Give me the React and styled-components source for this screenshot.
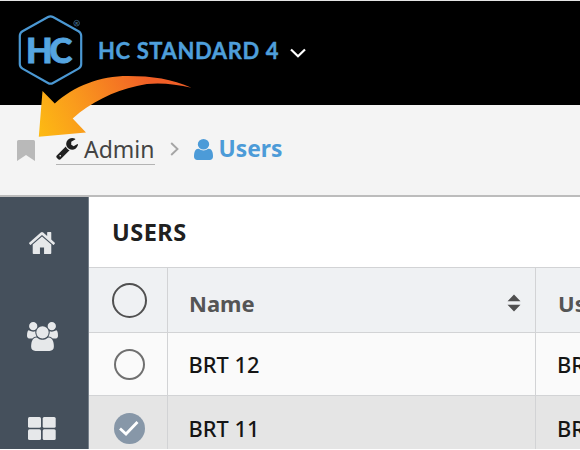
import React from "react";
import styled, { createGlobalStyle, css } from "styled-components";

const GlobalStyle = createGlobalStyle`
  * { box-sizing: border-box; }
  body { margin: 0; background: #fff; }
`;

const Screen = styled.div`
  position: relative;
  width: 580px;
  height: 449px;
  overflow: hidden;
  display: flex;
  flex-direction: column;
  border-top: 1px solid #e4e4e4;
  background: #f4f4f4;
  font-family: "Noto Sans", "Open Sans", sans-serif;
  white-space: nowrap;
`;

const TopBar = styled.header`
  flex: none;
  height: 104px;
  padding-left: 16px;
  display: flex;
  align-items: flex-start;
  background: #000;
`;

const Logo = styled.svg`
  flex: none;
  width: 70px;
  height: 90px;
  font-family: Lato, sans-serif;
`;

const ProductMenu = styled.div`
  display: flex;
  align-items: center;
  gap: 10px;
  height: 30px;
  margin: 35px 0 0 12px;
`;

const ProductName = styled.span`
  width: 182px;
  font: 700 22px/30px Lato, sans-serif;
  letter-spacing: 0.6px;
  -webkit-text-stroke: 0.4px #4e9fdb;
  color: #4e9fdb;
`;

const Breadcrumb = styled.nav`
  flex: none;
  height: 92px;
  padding: 28px 0 0 17px;
  display: flex;
  align-items: flex-start;
  border-bottom: 2px solid #bcbcbc;
`;

const Crumb = styled.span`
  display: flex;
  align-items: center;
  height: 32px;
  gap: 6px;
  font-size: 23px;
  line-height: 32px;
  color: #444;
  ${(p) => p.$link && css`
    margin-left: 21px;
    border-bottom: 1px solid #b4b4b4;
  `}
  ${(p) => p.$current && css`
    margin-left: 15px;
    color: #4c9bd8;
    font-size: 22.8px;
    font-weight: 700;
  `}
`;

const Glyph = styled.svg`
  flex: none;
  display: block;
  width: ${(p) => p.$w}px;
  height: ${(p) => p.$h}px;
  margin-top: ${(p) => p.$top || 0}px;
  margin-left: ${(p) => p.$left || 0}px;
`;

const Body = styled.div`
  flex: 1;
  min-height: 0;
  display: flex;
`;

const Sidebar = styled.aside`
  flex: none;
  width: 89px;
  padding: 35px 4px 0 0;
  display: flex;
  flex-direction: column;
  align-items: center;
  background: #45505c;
  border-right: 1px solid #76808a;
`;

const Content = styled.main`
  flex: 1;
  min-width: 0;
  overflow: hidden;
  background: #fff;
`;

const Title = styled.h1`
  margin: 0;
  height: 70px;
  padding-left: 23px;
  font-size: 23.5px;
  line-height: 70px;
  font-weight: 700;
  letter-spacing: 0.5px;
  color: #202020;
`;

const rowTones = {
  head: ["#eff1f3", "#555", 22, 700],
  plain: ["#fafafa", "#151515", 21.8, 500],
  selected: ["#e5e5e5", "#151515", 21.8, 500],
};

const Row = styled.div`
  display: grid;
  grid-template-columns: 79px 368px 200px;
  height: ${(p) => p.$height}px;
  border-top: 1px solid #d2d3d5;
  background: ${(p) => rowTones[p.$tone][0]};
  color: ${(p) => rowTones[p.$tone][1]};
  font-size: ${(p) => rowTones[p.$tone][2]}px;
  font-weight: ${(p) => rowTones[p.$tone][3]};
`;

const Cell = styled.div`
  display: flex;
  align-items: center;
  justify-content: ${(p) => (p.$center ? "center" : "space-between")};
  padding: ${(p) => p.$pad || "0 14px 0 20.500px"};
  border-right: 1px solid #d2d3d5;
`;

const Radio = styled.span`
  width: ${(p) => p.$size}px;
  height: ${(p) => p.$size}px;
  display: flex;
  align-items: center;
  justify-content: center;
  border-radius: 50%;
  border: ${(p) => (p.$checked ? "0" : `2px solid ${p.$tone}`)};
  background: ${(p) => (p.$checked ? "#8797a8" : "transparent")};
`;

const Callout = styled.svg`
  position: absolute;
  left: 0;
  top: -1px;
  width: 200px;
  height: 145px;
  pointer-events: none;
`;

const HOME =
  "M1472 992v480q0 26-19 45t-45 19h-384v-384h-256v384h-384q-26 0-45-19t-19-45v-480q0-1 .5-3t.5-3l575-474 575 474q1 2 1 6zm223-69l-62 74q-8 9-21 11h-3q-13 0-21-7l-692-577-692 577q-12 8-24 7-13-2-21-11l-62-74q-8-10-7-23.5t11-21.5l719-599q32-26 76-26t76 26l244 204v-195q0-14 9-23t23-9h192q14 0 23 9t9 23v408l219 182q10 8 11 21.5t-7 23.5z";
const USER =
  "M1536 1399q0 109-62.5 187t-150.5 78h-854q-88 0-150.5-78t-62.5-187q0-85 8.5-160.5t31.5-152 58.5-131 94-89 134.5-34.5q131 128 313 128t313-128q76 0 134.5 34.5t94 89 58.5 131 31.5 152 8.5 160.5zm-256-887q0 159-112.5 271.5t-271.5 112.5-271.5-112.5-112.5-271.5 112.5-271.5 271.5-112.5 271.5 112.5 112.5 271.5z";
const GROUP =
  "M529 896q-162 5-265 128h-134q-82 0-138-40.5t-56-118.5q0-353 124-353 6 0 43.5 21t97.5 42.5 119 21.5q67 0 133-23-5 37-5 66 0 139 81 256zm1071 637q0 120-73 189.5t-194 69.5h-874q-121 0-194-69.5t-73-189.5q0-53 3.5-103.5t14-109 26.5-108.5 43-97.5 62-81 85.5-53.5 111.5-20q10 0 43 21.5t73 48 107 48 135 21.5 135-21.5 107-48 73-48 43-21.5q61 0 111.5 20t85.5 53.5 62 81 43 97.5 26.5 108.5 14 109 3.5 103.5zm-1024-1277q0 106-75 181t-181 75-181-75-75-181 75-181 181-75 181 75 75 181zm704 384q0 159-112.5 271.5t-271.5 112.5-271.5-112.5-112.5-271.5 112.5-271.5 271.5-112.5 271.5 112.5 112.5 271.5zm576 225q0 78-56 118.5t-138 40.5h-134q-103-123-265-128 81-117 81-256 0-29-5-66 66 23 133 23 59 0 119-21.5t97.5-42.5 43.5-21q124 0 124 353zm-128-609q0 106-75 181t-181 75-181-75-75-181 75-181 181-75 181 75 75 181z";
const WRENCH =
  "M448 1472q0-26-19-45t-45-19-45 19-19 45 19 45 45 19 45-19 19-45zm644-420l-682 682q-37 37-90 37-52 0-91-37l-106-108q-38-36-38-90 0-53 38-91l681-681q39 98 114.5 173.5t173.5 114.5zm634-435q0 39-23 106-47 134-164.5 217.5t-258.5 83.5q-185 0-316.5-131.5t-131.5-316.5 131.5-316.5 316.5-131.5q58 0 121.5 16.5t107.5 46.5q16 11 16 28t-16 28l-293 169v224l193 107q5-3 79-48.5t135.5-81 70.5-35.5q15 0 23.5 10t8.5 25z";

function BrandLogo() {
  return (
    <Logo viewBox="16 1 70 90">
      <path
        d="M48 17 Q50.500 15.600 53 17 L78.500 31.200 Q81.200 32.800 81.200 36 V64 Q81.200 67 78.500 68.600 L53 83 Q50.500 84.400 48 83 L22.500 68.600 Q19.800 67 19.800 64 V36 Q19.800 32.800 22.500 31.200 Z"
        fill="none"
        stroke="#4b98d3"
        strokeWidth="2.200"
      />
      <text
        x="26"
        y="62.600"
        fontSize="34.500"
        fontWeight="900"
        letterSpacing="-3.300"
        fill="#55a5e0"
        stroke="#55a5e0"
        strokeWidth="0.900"
      >
        HC
      </text>
      <circle cx="76.600" cy="23.200" r="2.800" fill="none" stroke="#39617f" strokeWidth="0.900" />
      <text x="75.200" y="25" fontSize="4.500" fontWeight="700" fill="#4a7b9f">R</text>
    </Logo>
  );
}

function DataRow({ name, user, selected, height }) {
  return (
    <Row $tone={selected ? "selected" : "plain"} $height={height}>
      <Cell $center $pad="0 0 0 2px">
        <Radio $size={31} $tone="#707070" $checked={selected}>
          {selected && (
            <Glyph viewBox="0 0 20 16" $w={20} $h={16}>
              <path d="M1 8.500 L7 14 L18.500 2" fill="none" stroke="#fff" strokeWidth="2.800" />
            </Glyph>
          )}
        </Radio>
      </Cell>
      <Cell>{name}</Cell>
      <Cell $pad="0 14px 0 21px">{user}</Cell>
    </Row>
  );
}

export default function App() {
  return (
    <Screen>
      <GlobalStyle />
      <TopBar>
        <BrandLogo />
        <ProductMenu>
          <ProductName>HC STANDARD 4</ProductName>
          <Glyph viewBox="0 0 16 10" $w={16} $h={10} $top={4}>
            <path d="M1 1.500 L8 8.200 L15 1.500" fill="none" stroke="#fff" strokeWidth="2.200" />
          </Glyph>
        </ProductMenu>
      </TopBar>
      <Breadcrumb>
        <Glyph viewBox="0 0 18 21" $w={18} $h={21} $top={6.5}>
          <path d="M0 1.500Q0 0 1.500 0H16.500Q18 0 18 1.500V21L9 15L0 21Z" fill="#b9b9b9" />
        </Glyph>
        <Crumb $link>
          <Glyph viewBox="64 128 1664 1664" $w={22} $h={22}>
            <path d={WRENCH} fill="#202020" />
          </Glyph>
          Admin
        </Crumb>
        <Glyph viewBox="0 0 9 14" $w={9} $h={14} $top={9} $left={15}>
          <path d="M1.200 1 L7.500 7 L1.200 13" fill="none" stroke="#a5a5a5" strokeWidth="1.900" />
        </Glyph>
        <Crumb $current>
          <Glyph viewBox="256 128 1280 1536" $w={19} $h={21} preserveAspectRatio="none">
            <path d={USER} fill="#4c9bd8" />
          </Glyph>
          Users
        </Crumb>
      </Breadcrumb>
      <Body>
        <Sidebar>
          <Glyph viewBox="89 253 1614 1283" $w={26} $h={22} preserveAspectRatio="none">
            <path d={HOME} fill="#e6e8ea" />
          </Glyph>
          <Glyph viewBox="-64 0 1920 1792" $w={31} $h={29} $top={68}>
            <path d={GROUP} fill="#e6e8ea" />
          </Glyph>
          <Glyph viewBox="0 0 28 23" $w={28} $h={23} $top={66}>
            <g fill="#e6e8ea">
              <rect width="13" height="10.700" rx="1.500" />
              <rect x="14.700" width="13" height="10.700" rx="1.500" />
              <rect y="12.200" width="13" height="10.700" rx="1.500" />
              <rect x="14.700" y="12.200" width="13" height="10.700" rx="1.500" />
            </g>
          </Glyph>
        </Sidebar>
        <Content>
          <Title>USERS</Title>
          <Row $tone="head" $height={65}>
            <Cell $center $pad="0 0 0 2px">
              <Radio $size={35} $tone="#505050" />
            </Cell>
            <Cell $pad="6px 14px 0 21px">
              Name
              <Glyph viewBox="0 0 14 18" $w={14} $h={18}>
                <path d="M0.500 7.300 L7 0.500 L13.500 7.300Z M0.500 10.700 L7 17.500 L13.500 10.700Z" fill="#505050" />
              </Glyph>
            </Cell>
            <Cell $pad="6px 14px 0 22px">Username</Cell>
          </Row>
          <DataRow name="BRT 12" user="BRT 12" height={63} />
          <DataRow name="BRT 11" user="BRT 11" selected height={65} />
        </Content>
      </Body>
      <Callout viewBox="0 0 200 145">
        <defs>
          <linearGradient id="callout-fill" gradientUnits="userSpaceOnUse" x1="39" y1="130" x2="150" y2="80">
            <stop offset="0" stopColor="#fdb913" />
            <stop offset="0.350" stopColor="#fa9c1c" />
            <stop offset="1" stopColor="#f15f27" />
          </linearGradient>
        </defs>
        <path
          d="M38.800 136.700 L42.500 91 L54.800 103.500 C74 86 100 76 128 76 C152 76 172 79 191.500 87.800 C173 83.500 153 81.500 137 86 C113 91.500 91 102 72.700 118.500 L86 132.500 Z"
          fill="url(#callout-fill)"
        />
      </Callout>
    </Screen>
  );
}
